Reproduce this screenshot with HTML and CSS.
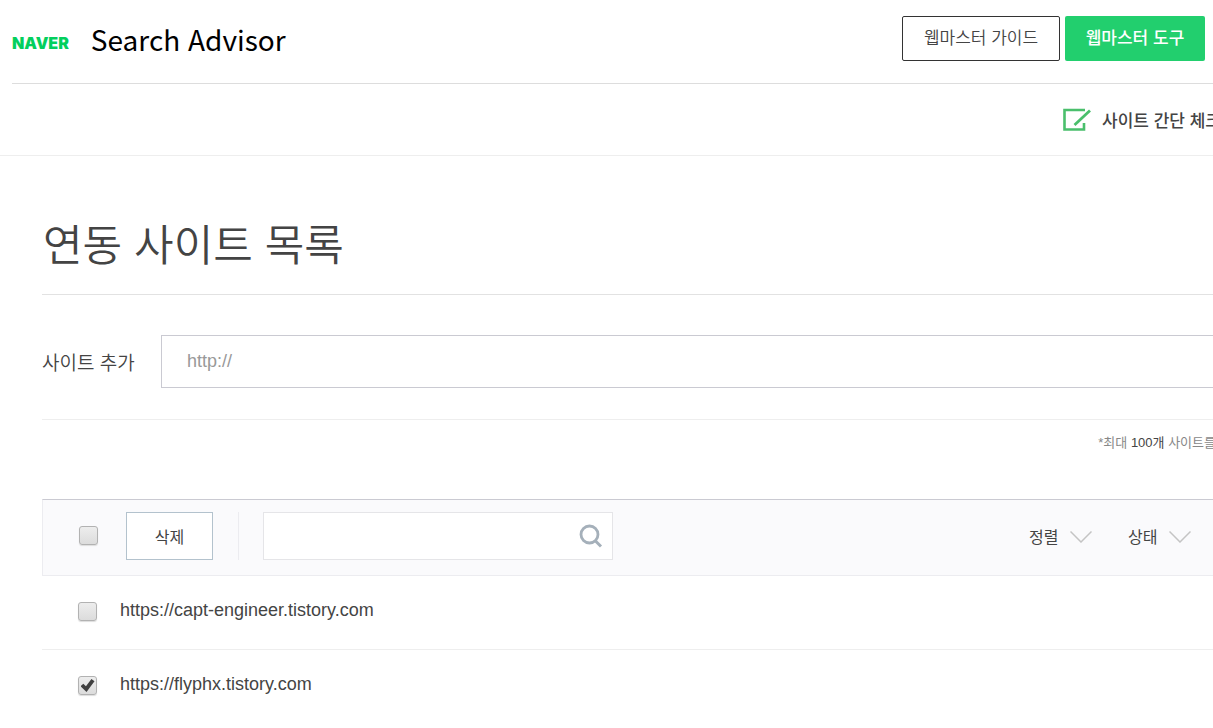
FILE: index.html
```html
<!DOCTYPE html>
<html lang="ko">
<head>
    <meta charset="UTF-8">
    <meta name="viewport" content="width=device-width, initial-scale=1.0">
    <title>Search Advisor</title>
    <link rel="stylesheet" href="styles.css">
</head>
<body>
    <div class="page">
        <header class="header">
            <a class="brand" href="#">
                <span class="brand-naver">NAVER</span>
                <span class="brand-name">Search Advisor</span>
            </a>
            <div class="header-buttons">
                <button class="btn btn-guide" type="button">웹마스터 가이드</button>
                <button class="btn btn-tools" type="button">웹마스터 도구</button>
            </div>
        </header>

        <nav class="subnav">
            <a class="check-link" href="#">
                <svg width="28" height="24" viewBox="0 0 28 24" fill="none" stroke="#4abf6c">
                    <path d="M22 2H1.5V21.500H21V15" stroke-width="2.600"/>
                    <path d="M11.500 17L27 2.500" stroke-width="2.800"/>
                </svg>
                <span>사이트 간단 체크</span>
            </a>
        </nav>

        <main class="content">
            <h1 class="title">연동 사이트 목록</h1>

            <form class="add-form">
                <label class="add-label" for="site-url">사이트 추가</label>
                <input class="add-input" id="site-url" type="text" placeholder="http://">
            </form>

            <p class="note">*최대 <strong>100개</strong> 사이트를</p>

            <section class="sites">
                <div class="toolbar">
                    <input class="check" type="checkbox" aria-label="전체 선택">
                    <button class="btn-delete" type="button">삭제</button>
                    <div class="search">
                        <input class="search-input" type="text" aria-label="검색">
                        <button class="search-btn" type="button" aria-label="검색">
                            <svg width="24" height="24" viewBox="0 0 24 24" fill="none" stroke="#a5b0ba">
                                <circle cx="10.500" cy="10.500" r="8.500" stroke-width="2.800"/>
                                <path d="M16.500 17L22 22.500" stroke-width="3"/>
                            </svg>
                        </button>
                    </div>
                    <div class="filters">
                        <div class="filter">
                            <select class="filter-select" aria-label="정렬"><option>정렬</option></select>
                            <svg class="chevron" width="22" height="12" viewBox="0 0 22 12" fill="none" stroke="#c4c4c4" stroke-width="1.500">
                                <path d="M.5.5L11 11L21.500.5"/>
                            </svg>
                        </div>
                        <div class="filter">
                            <select class="filter-select" aria-label="상태"><option>상태</option></select>
                            <svg class="chevron" width="22" height="12" viewBox="0 0 22 12" fill="none" stroke="#c4c4c4" stroke-width="1.500">
                                <path d="M.5.5L11 11L21.500.5"/>
                            </svg>
                        </div>
                    </div>
                </div>

                <ul class="site-list">
                    <li class="site">
                        <input class="check" type="checkbox" aria-label="capt-engineer.tistory.com">
                        <a class="site-link" href="#">https://capt-engineer.tistory.com</a>
                    </li>
                    <li class="site">
                        <input class="check" type="checkbox" aria-label="flyphx.tistory.com" checked>
                        <a class="site-link" href="#">https://flyphx.tistory.com</a>
                    </li>
                </ul>
            </section>
        </main>
    </div>
</body>
</html>
```
FILE: styles.css
```css
* {
    box-sizing: border-box;
}
body {
    margin: 0;
    overflow: hidden;
    background: #fff;
    color: #444;
    font-family: "Liberation Sans", "Noto Sans CJK KR", sans-serif;
    font-size: 17px;
}
a {
    color: inherit;
    text-decoration: none;
}
button,
input,
select {
    font-family: inherit;
    color: inherit;
}
.page {
    min-width: 1221px;
}

/* header */
.header {
    display: flex;
    align-items: flex-start;
    justify-content: space-between;
    height: 84px;
    margin-left: 12px;
    padding: 16px 16px 0 0;
    border-bottom: 1px solid #ddd;
}
.brand {
    display: flex;
    align-items: center;
    gap: 22px;
    line-height: 38px;
}
.brand-naver {
    padding-top: 8px;
    color: #03cf5d;
    font-family: Inter, sans-serif;
    font-size: 16px;
    font-weight: 900;
}
.brand-name {
    color: #000;
    font-family: "Noto Sans CJK KR", sans-serif;
    font-size: 28px;
}
.header-buttons {
    display: flex;
    gap: 5px;
}
.btn {
    height: 45px;
    padding: 0 0 4px;
    border-radius: 2px;
    font-size: 17px;
    cursor: pointer;
}
.btn-guide {
    width: 158px;
    border: 1px solid #333;
    background: #fff;
    font-weight: 350;
}
.btn-tools {
    width: 140px;
    border: 0;
    background: #22cf6e;
    color: #fff;
    font-weight: 500;
}

/* sub navigation */
.subnav {
    display: flex;
    justify-content: flex-end;
    height: 72px;
    border-bottom: 1px solid #eee;
}
.check-link {
    display: flex;
    align-items: center;
    gap: 11px;
    font-weight: 500;
    white-space: nowrap;
}

/* content */
.content {
    padding-left: 42px;
}
.title {
    margin: 0;
    padding: 55px 0 13px 1px;
    border-bottom: 1px solid #e2e2e2;
    font-size: 43px;
    font-weight: 350;
    line-height: 70px;
}
.add-form {
    display: flex;
    align-items: center;
    padding: 40px 0 31px;
    border-bottom: 1px solid #eee;
}
.add-label {
    width: 119px;
    font-size: 19px;
    font-weight: 350;
}
.add-input {
    flex: 1;
    height: 53px;
    padding: 0 25px;
    border: 1px solid #cacad2;
    font-size: 18px;
}
.add-input::placeholder {
    color: #999;
}
.note {
    margin: 0;
    padding: 13px 5px 46px 0;
    color: #888;
    font-size: 13px;
    line-height: 20px;
    text-align: right;
}
.note strong {
    color: #444;
    font-weight: 400;
}

/* site table */
.toolbar {
    display: flex;
    align-items: center;
    height: 77px;
    padding: 0 29px 4px 36px;
    border: 1px solid #ececf0;
    border-top-color: #cacad2;
    background: #fafafc;
}
.check {
    display: grid;
    place-content: center;
    flex: none;
    width: 19px;
    height: 19px;
    margin: 0;
    appearance: none;
    border: 1px solid #b2b2b2;
    border-radius: 3px;
    background: linear-gradient(#ededed, #dcdcdc);
    box-shadow: 0 1px 1px #ddd;
}
.check:checked::before {
    content: "";
    width: 14px;
    height: 13px;
    background: #404040;
    clip-path: polygon(0 55%, 20% 37%, 39% 56%, 78% 0, 100% 18%, 43% 100%);
}
.btn-delete {
    width: 87px;
    height: 48px;
    margin-left: 28px;
    border: 1px solid #b3c2cd;
    background: #fff;
    font-size: 16px;
}
.search {
    display: flex;
    position: relative;
    margin-left: 25px;
    padding-left: 24px;
    border-left: 1px solid #ececf0;
}
.search-input {
    width: 350px;
    height: 48px;
    padding: 0 50px 0 15px;
    border: 1px solid #e5e5e8;
    background: #fff;
    font-size: 16px;
}
.search-btn {
    position: absolute;
    top: 12px;
    right: 10px;
    height: 24px;
    padding: 0;
    border: 0;
    background: none;
}
.filters {
    display: flex;
    gap: 36px;
    margin-left: auto;
    padding-top: 3px;
}
.filter {
    position: relative;
}
.filter-select {
    width: 63px;
    height: 30px;
    padding: 0;
    appearance: none;
    border: 0;
    background: none;
    font-size: 16px;
}
.chevron {
    position: absolute;
    top: 9px;
    right: 0;
    pointer-events: none;
}
.site-list {
    margin: 0;
    padding: 0;
    list-style: none;
}
.site {
    display: flex;
    align-items: center;
    gap: 23px;
    height: 74px;
    padding: 0 0 2px 36px;
    border-bottom: 1px solid #eee;
}
.site:last-child {
    height: 73px;
    border-bottom: 0;
}
.site-link {
    padding-bottom: 2px;
    font-size: 18px;
}
```
